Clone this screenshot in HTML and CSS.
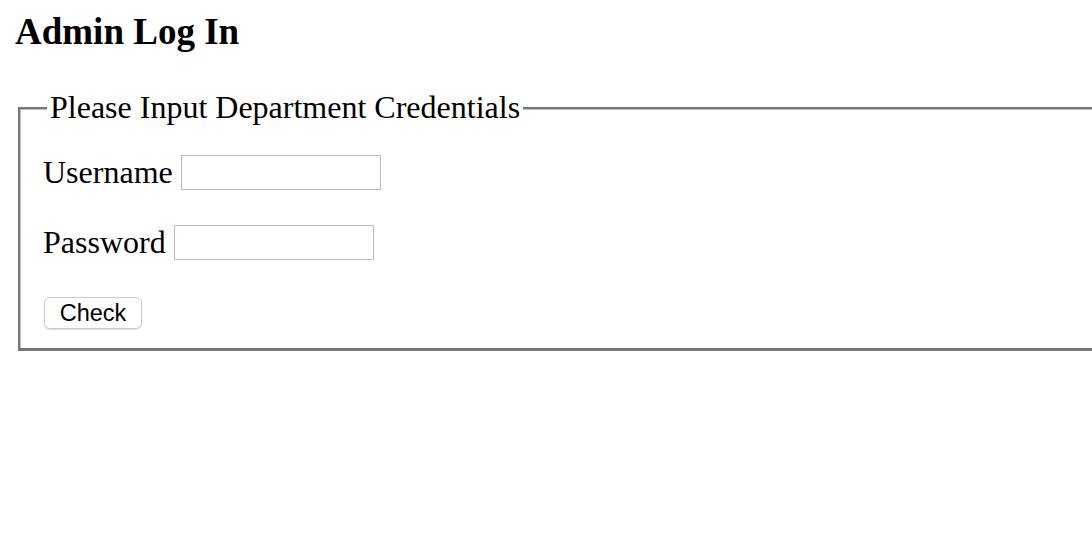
FILE: index.html
```html
<!DOCTYPE html>
<html lang="en">
<head>
<meta charset="utf-8">
<title>Admin Log In</title>
<link rel="stylesheet" href="styles.css">
</head>
<body>
<main class="page">
  <h1 class="title">Admin Log In</h1>
  <form class="login">
    <fieldset class="box">
      <legend class="box-legend">Please Input Department Credentials</legend>
      <div class="row">
        <label class="label" for="user">Username</label>
        <input class="field field-user" id="user" type="text">
      </div>
      <div class="row">
        <label class="label" for="pass">Password</label>
        <input class="field" id="pass" type="password">
      </div>
      <div class="actions">
        <button class="btn" type="button">Check</button>
      </div>
    </fieldset>
  </form>
</main>
</body>
</html>
```

FILE: styles.css
```css
html {
  overflow: hidden;
  background: #fff;
}
body {
  margin: 0;
  font-family: "Liberation Serif", "Times New Roman", serif;
  color: #000;
}
.page {
  display: flex;
  flex-direction: column;
  padding: 11px 0 0 15px;
  gap: 38px;
}
.title {
  margin: 0;
  font-size: 37px;
  font-weight: bold;
  line-height: 41px;
}
.login {
  margin: 0;
  padding-left: 3px;
}
.box {
  margin: 0;
  width: 1200px;
  padding: 30px 22px 19px 23px;
  border-style: solid;
  border-color: #777;
  border-width: 2px 3px 3px 2px;
  box-shadow: inset 1px 1px 0 #bdbdbd;
  display: flex;
  flex-direction: column;
  gap: 35px;
}
.box-legend {
  font-size: 32px;
  line-height: 35px;
  padding: 0 3px;
  margin-left: 4px;
  background: #fff;
}
.row {
  display: flex;
  align-items: center;
  gap: 8px;
  height: 35px;
}
.field-user {
  margin-left: 2px;
}
.label {
  font-size: 32px;
  line-height: 35px;
}
.field {
  box-sizing: border-box;
  width: 200px;
  height: 35px;
  margin: 0;
  border: 1px solid #bebebe;
  background: #fff;
  padding: 2px 4px;
  font-size: 20px;
}
.actions {
  display: flex;
  margin-top: 2px;
}
.btn {
  box-sizing: border-box;
  width: 98px;
  height: 32px;
  margin: 0 0 0 1px;
  padding: 0 0 1px;
  border: 1px solid #cbcbcb;
  border-radius: 6px;
  background: #fff;
  box-shadow: 0 1px 1px rgba(0,0,0,0.12);
  font-family: "Liberation Sans", Arial, sans-serif;
  font-size: 23.5px;
  line-height: 30px;
  color: #000;
}
```
